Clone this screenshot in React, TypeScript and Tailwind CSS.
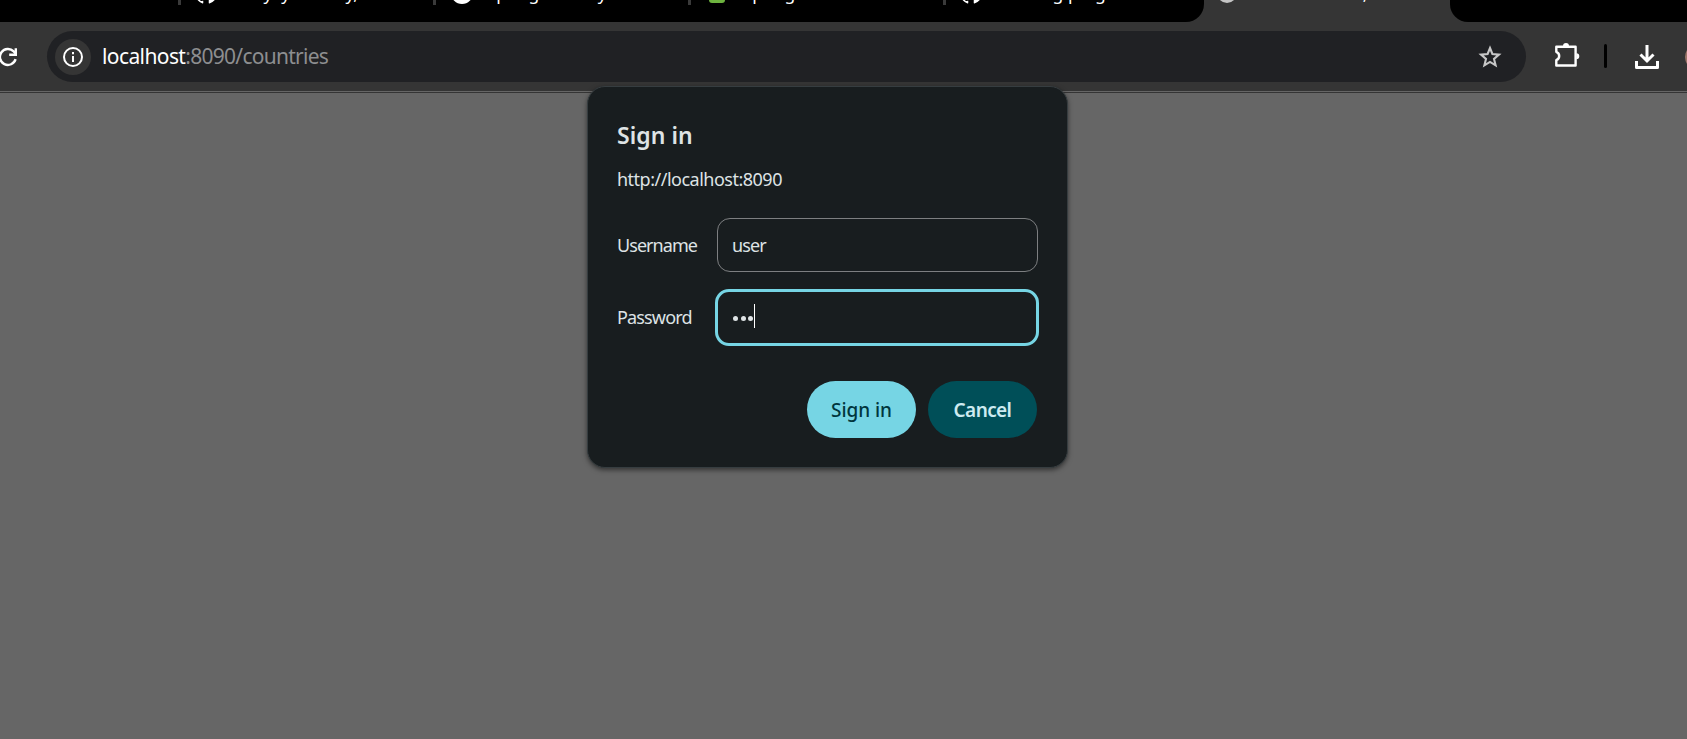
import React from "react";

function Tab({ width, icon, title, left, iconLeft }: { width: string; icon: React.ReactNode; title: string; left: string; iconLeft: string }) {
  return (
    <div className={`flex h-11 shrink-0 items-center overflow-hidden ${width}`}>
      <div className="h-6 w-[3px] shrink-0 bg-[#3a3a3a]" />
      <div className={`w-5 shrink-0 ${iconLeft}`}>{icon}</div>
      <div className={`whitespace-nowrap text-[17.5px] leading-6 text-white ${left}`}>{title}</div>
    </div>
  );
}

const GitHub = () => (
  <svg width="22" height="22" viewBox="0 0 16 16" fill="#fff" className="block">
    <path d="M8 0C3.58 0 0 3.58 0 8c0 3.54 2.29 6.53 5.47 7.59.4.07.55-.17.55-.38 0-.19-.01-.82-.01-1.49-2.01.37-2.53-.49-2.69-.94-.09-.23-.48-.94-.82-1.13-.28-.15-.68-.52-.01-.53.63-.01 1.08.58 1.23.82.72 1.21 1.87.87 2.33.66.07-.52.28-.87.51-1.07-1.78-.2-3.64-.89-3.64-3.95 0-.87.31-1.59.82-2.15-.08-.2-.36-1.02.08-2.12 0 0 .67-.21 2.2.82a7.6 7.6 0 0 1 4 0c1.53-1.04 2.2-.82 2.2-.82.44 1.1.16 1.92.08 2.12.51.56.82 1.27.82 2.15 0 3.07-1.87 3.75-3.65 3.95.29.25.54.73.54 1.48 0 1.07-.01 1.93-.01 2.2 0 .21.15.46.55.38A8.01 8.01 0 0 0 16 8c0-4.42-3.58-8-8-8Z" />
  </svg>
);

export default function App() {
  return (
    <div className="relative flex h-[739px] w-[1687px] flex-col overflow-hidden bg-[#666] font-['Noto_Sans','Open_Sans',sans-serif]">
      <div className="flex h-[22px] shrink-0 items-end overflow-hidden bg-[#353535]">
        <div className="flex h-11 w-[1204px] shrink-0 overflow-hidden rounded-br-[18px] bg-black pl-[178px]">
          <div className="-mt-[7px] flex">
            <Tab width="w-[255px]" iconLeft="ml-[14px]" left="ml-[13px] tracking-[-0.5px]" icon={<GitHub />} title="Ramyayabinetry," />
            <Tab width="w-[255px]" iconLeft="ml-[15px]" left="ml-[16px] tracking-[-0.3px]" icon={<div className="h-[22px] w-[22px] rounded-full bg-white" />} title="Spring Security" />
            <Tab width="w-[255px]" iconLeft="ml-[18px]" left="ml-[14px] tracking-[-0.3px]" icon={<div className="h-5 w-4 rounded-[3px] bg-[#6db33f]" />} title="Spring" />
            <Tab width="w-[255px]" iconLeft="ml-[14px]" left="ml-[13px] tracking-[-0.4px]" icon={<GitHub />} title="Learning-prog" />
          </div>
        </div>
        <div className="flex h-11 w-[246px] shrink-0 items-center overflow-hidden pl-[13px]">
          <div className="-mt-[14px] h-[20px] w-[20px] rounded-full bg-[#c4c4c4]" />
          <div className="-mt-[14px] ml-[7px] whitespace-nowrap text-[17.5px] leading-6 tracking-[0px] text-white">localhost:8090,</div>
        </div>
        <div className="h-11 flex-1 rounded-bl-[18px] bg-black" />
      </div>

      <div className="flex h-[69px] shrink-0 items-start bg-[#353535] pt-[9px]">
        <svg width="20" height="20" viewBox="0 0 20 20" className="-ml-[2px] mt-4 shrink-0" fill="none" stroke="#fff" strokeWidth="2.4">
          <path d="M17.6 12.2A8 8 0 1 1 15.7 4.4L18 7" />
          <path d="M17.8 1.2v6.6h-6.6" />
        </svg>
        <div className="ml-[29px] flex h-[51px] w-[1479px] shrink-0 items-center rounded-full bg-[#202124] pl-[8px] pr-[24px]">
          <div className="flex h-9 w-9 items-center justify-center rounded-full bg-[#353535]">
            <svg width="20" height="20" viewBox="0 0 20 20" fill="none" stroke="#fff" strokeWidth="2">
              <circle cx="10" cy="10" r="9" />
              <path d="M10 9v6M10 5v2.2" />
            </svg>
          </div>
          <div className="ml-[11px] mt-px whitespace-nowrap text-[21px] tracking-[-0.73px] text-[#8d8e90]">
            <span className="tracking-[-0.6px] text-white">localhost</span>:8090/countries
          </div>
          <svg width="24" height="24" viewBox="0 0 24 24" className="ml-auto" fill="none" stroke="#c7c7c7" strokeWidth="2.1">
            <path d="M12 3 14.4 9 21 9.6 16 13.9 17.6 20.3 12 16.9 6.4 20.3 8 13.9 3 9.6 9.6 9Z" />
          </svg>
        </div>
        <svg width="28" height="28" viewBox="0 0 28 28" className="ml-[27px] mt-[11px] shrink-0">
          <path d="M3.3 4.8H22.6V23.5H3.3V18.2Q6.2 17 6.2 14Q6.2 11 3.3 9.8Z" fill="none" stroke="#fff" strokeWidth="2.4" strokeLinejoin="round" />
          <path d="M10 4a3 3 0 0 1 6 0ZM23.3 11.2a3 3 0 0 1 0 6Z" fill="#fff" />
        </svg>
        <div className="ml-[23px] mt-[13px] h-6 w-[3px] shrink-0 rounded bg-black" />
        <svg width="26" height="26" viewBox="0 0 26 26" className="ml-[27px] mt-[13px] shrink-0" fill="none" stroke="#fff" strokeWidth="3">
          <path d="M13 1v15M6.5 10.5l6.5 6.5 6.5-6.5" />
          <path d="M2.5 17v6.5h21V17" strokeLinejoin="round" />
        </svg>
        <div className="ml-[25px] mt-[13px] h-[26px] w-[26px] shrink-0 rounded-full bg-[#9b7468]" />
      </div>
      <div className="h-px shrink-0 bg-[#666]" />
      <div className="h-px shrink-0 bg-[#353535]" />

      <div className="absolute left-[587px] top-[86px] flex h-[382px] w-[481px] flex-col rounded-[18px] border border-[#363d40] bg-[#181d1f] pl-[29px] pr-[28px] text-[#dee3e5] shadow-[0_2px_5px_rgba(0,0,0,0.5)]">
        <h1 className="mt-[32px] text-[23px] font-semibold leading-[32px] tracking-[0.05px]">Sign in</h1>
        <p className="mt-[15px] text-[18px] leading-[26px] tracking-[-0.5px]">http://localhost:8090</p>
        <div className="mr-px mt-[26px] flex h-[54px] items-center">
          <label className="w-[100px] text-[18px] tracking-[-0.95px]">Username</label>
          <div className="flex h-[54px] flex-1 items-center rounded-[13px] border border-[#7d7f81] pl-[14px] text-[18px] tracking-[-0.9px]">user</div>
        </div>
        <div className="mt-[17px] flex h-[57px] items-center">
          <label className="w-[98px] text-[18px] tracking-[-0.85px]">Password</label>
          <div className="flex h-[57px] flex-1 items-center rounded-[14px] border-[3px] border-[#76d5e4] pl-[15px]">
            <div className="mt-[2px] flex gap-[2.5px]">
              <i className="h-[5px] w-[5px] rounded-full bg-[#dee3e5]" />
              <i className="h-[5px] w-[5px] rounded-full bg-[#dee3e5]" />
              <i className="h-[5px] w-[5px] rounded-full bg-[#dee3e5]" />
            </div>
            <div className="-mt-[3px] ml-px h-6 w-px bg-white" />
          </div>
        </div>
        <div className="mr-[2px] mt-[35px] flex justify-end gap-3 text-[19px] font-medium tracking-[-0.05px]">
          <button className="h-[57px] w-[109px] rounded-full bg-[#76d5e4] pt-px text-[#00363d]">Sign in</button>
          <button className="h-[57px] w-[109px] rounded-full bg-[#004f58] pt-px font-semibold tracking-[-0.6px] text-[#cdeaf0]">Cancel</button>
        </div>
      </div>
    </div>
  );
}
